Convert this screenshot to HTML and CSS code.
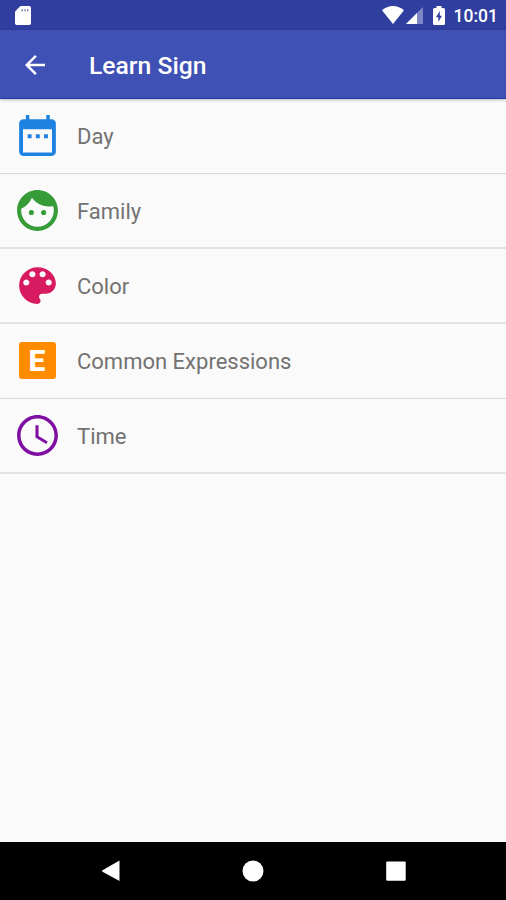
FILE: index.html
```html
<!DOCTYPE html>
<html lang="en">
<head>
<meta charset="utf-8">
<title>Learn Sign</title>
<link rel="stylesheet" href="styles.css">
</head>
<body>
<div class="status">
  <svg class="sd" viewBox="0 0 16 19"><path d="M5.5 0H14.2Q16 0 16 1.8V17.2Q16 19 14.2 19H1.8Q0 19 0 17.2V5.5z" fill="#fff"/><path d="M6.5 3.2h1.5v2H6.500zM9.300 3.200h1.500v2H9.300zM12 3.200h1.500v2H12z" fill="#8088bd"/></svg>
  <svg class="wifi" viewBox="0 0 22 18"><path d="M11 18L0 4.300C3 1.600 6.800 0 11 0s8 1.600 11 4.300z" fill="#fff"/></svg>
  <svg class="signal" viewBox="0 0 17 17"><path d="M17 0v17H0z" fill="#7d87c5"/><path d="M11 6v11H0z" fill="#fff"/></svg>
  <svg class="battery" viewBox="0 0 12 19"><path d="M3.500 0h5v2H10.500Q12 2 12 3.500v14Q12 19 10.500 19h-9Q0 19 0 17.500v-14Q0 2 1.500 2h2z" fill="#fff"/><path d="M6.800 5L3 11.300h2.400V16L9 9.700H6.800z" fill="#303f9f"/></svg>
  <span class="clock">10:01</span>
</div>
<header class="toolbar">
  <svg class="back" viewBox="0 0 24 24"><path fill="#fff" d="M20 11H7.830l5.590-5.590L12 4l-8 8 8 8 1.410-1.410L7.830 13H20v-2z"/></svg>
  <h1>Learn Sign</h1>
</header>
<main class="list">
  <div class="row thin">
    <svg class="icon" viewBox="0 0 24 24" fill="#1e82e0"><path d="M7.200 11.400h1.900v1.900H7.200zM11.200 11.400h1.900v1.900h-1.900zM15.200 11.400h1.900v1.900h-1.900zM19 4h-1V2h-1.700v2H8V2H6.300v2H5c-1.110 0-2 .9-2 2v14c0 1.100.89 2 2 2h14c1.100 0 2-.9 2-2V6c0-1.100-.9-2-2-2zm.1 16.300H4.900V8.900h14.200z"/></svg>
    <span>Day</span>
  </div>
  <div class="row">
    <svg class="icon" viewBox="0 0 24 24" fill="#359c38"><circle cx="9" cy="13" r="1.250"/><circle cx="15" cy="13" r="1.250"/><path d="M12 2C6.480 2 2 6.480 2 12s4.480 10 10 10 10-4.480 10-10S17.520 2 12 2zm0 18c-4.410 0-8-3.590-8-8 0-.29.02-.58.05-.86 2.360-1.050 4.230-2.980 5.210-5.370C11.070 8.330 14.050 10 17.420 10c.78 0 1.530-.09 2.250-.26.21.71.33 1.470.33 2.260 0 4.410-3.590 8-8 8z"/></svg>
    <span>Family</span>
  </div>
  <div class="row">
    <svg class="icon" viewBox="0 0 24 24" fill="#d81b60"><path d="M12 3c-4.970 0-9 4.030-9 9s4.030 9 9 9c.83 0 1.500-.67 1.500-1.500 0-.39-.15-.74-.39-1.010-.23-.26-.38-.61-.38-.99 0-.83.67-1.500 1.500-1.500H16c2.760 0 5-2.240 5-5 0-4.420-4.030-8-9-8zm-5.500 9c-.83 0-1.500-.67-1.500-1.500S5.670 9 6.500 9 8 9.670 8 10.500 7.330 12 6.500 12zm3-4C8.670 8 8 7.330 8 6.500S8.670 5 9.500 5s1.500.67 1.500 1.500S10.330 8 9.500 8zm5 0c-.83 0-1.500-.67-1.500-1.500S13.670 5 14.500 5s1.500.67 1.500 1.500S15.330 8 14.500 8zm3 4c-.83 0-1.500-.67-1.500-1.500S16.670 9 17.500 9s1.500.67 1.500 1.500-.67 1.500-1.500 1.500z"/></svg>
    <span>Color</span>
  </div>
  <div class="row thin">
    <div class="icon tile-box"><b class="tile">E</b></div>
    <span>Common Expressions</span>
  </div>
  <div class="row">
    <svg class="icon" viewBox="0 0 24 24" fill="#7f0fa3"><path d="M11.990 2C6.470 2 2 6.480 2 12s4.470 10 9.990 10C17.520 22 22 17.520 22 12S17.520 2 11.990 2zM12 20.300c-4.580 0-8.300-3.720-8.300-8.300s3.720-8.300 8.300-8.300 8.300 3.720 8.300 8.300-3.720 8.300-8.300 8.300zM12.500 7H11v6l5.250 3.150.75-1.230-4.500-2.670z"/></svg>
    <span>Time</span>
  </div>
</main>
<nav class="nav">
  <svg viewBox="0 0 22 22"><path d="M19.500.6v20.300L2.500 11.700q-1-.7 0-1.400z" fill="#fff"/></svg>
  <svg viewBox="0 0 22 22"><circle cx="11" cy="11" r="10.500" fill="#fff"/></svg>
  <svg viewBox="0 0 22 22"><rect x="1.200" y="1.500" width="19.500" height="19.300" rx="1" fill="#fff"/></svg>
</nav>
</body>
</html>
```
FILE: styles.css
```css
* { box-sizing: border-box; }
body {
  margin: 0;
  height: 900px;
  display: flex;
  flex-direction: column;
  background: #fafafa;
  font-family: Roboto, sans-serif;
  overflow: hidden;
}
svg { display: block; flex: none; }
.status {
  height: 30px;
  flex: none;
  display: flex;
  align-items: flex-start;
  padding: 6px 10px 0 15px;
  background: #303f9f;
  color: #fff;
}
.sd { width: 16px; height: 19px; }
.wifi { width: 22px; height: 18px; margin-left: auto; }
.signal { width: 17px; height: 17px; margin: 1px 10px 0 2px; }
.battery { width: 12px; height: 19px; margin-right: 9px; }
.clock { width: 42.5px; font-size: 17.5px; line-height: 20px; font-weight: 500; white-space: nowrap; }
.toolbar {
  height: 69px;
  flex: none;
  display: flex;
  align-items: center;
  padding: 0 20px;
  background: #3f51b5;
  border-bottom: 1px solid #213a9f;
  box-shadow: 0 1px 3px rgba(0, 0, 0, .25);
  color: #fff;
}
.back { width: 30px; height: 30px; margin: 1px 39px 0 0; }
h1 { margin: 4px 0 0; font-size: 24.7px; line-height: 30px; font-weight: 500; }
.list { flex: 1; }
.row {
  height: 75px;
  display: flex;
  align-items: center;
  gap: 15.5px;
  padding-left: 12.5px;
  border-bottom: 2px solid #e3e3e3;
  color: #727272;
  font-size: 22px;
}
.thin {
  padding-bottom: 1px;
  border-bottom: 1px solid #d9d9d9;
}
.row span { padding-top: 1px; }
.icon { width: 49px; height: 49px; flex: none; }
.tile-box { display: flex; align-items: center; justify-content: center; }
.tile {
  width: 37px;
  height: 37px;
  border-radius: 3px;
  background: #ff8c00;
  color: #fff;
  font-size: 30px;
  line-height: 38px;
  font-weight: 800;
  text-align: center;
}
.nav {
  height: 58px;
  flex: none;
  display: flex;
  justify-content: center;
  align-items: center;
  gap: 120.5px;
  background: #000;
}
.nav svg { width: 22px; height: 22px; }
```
